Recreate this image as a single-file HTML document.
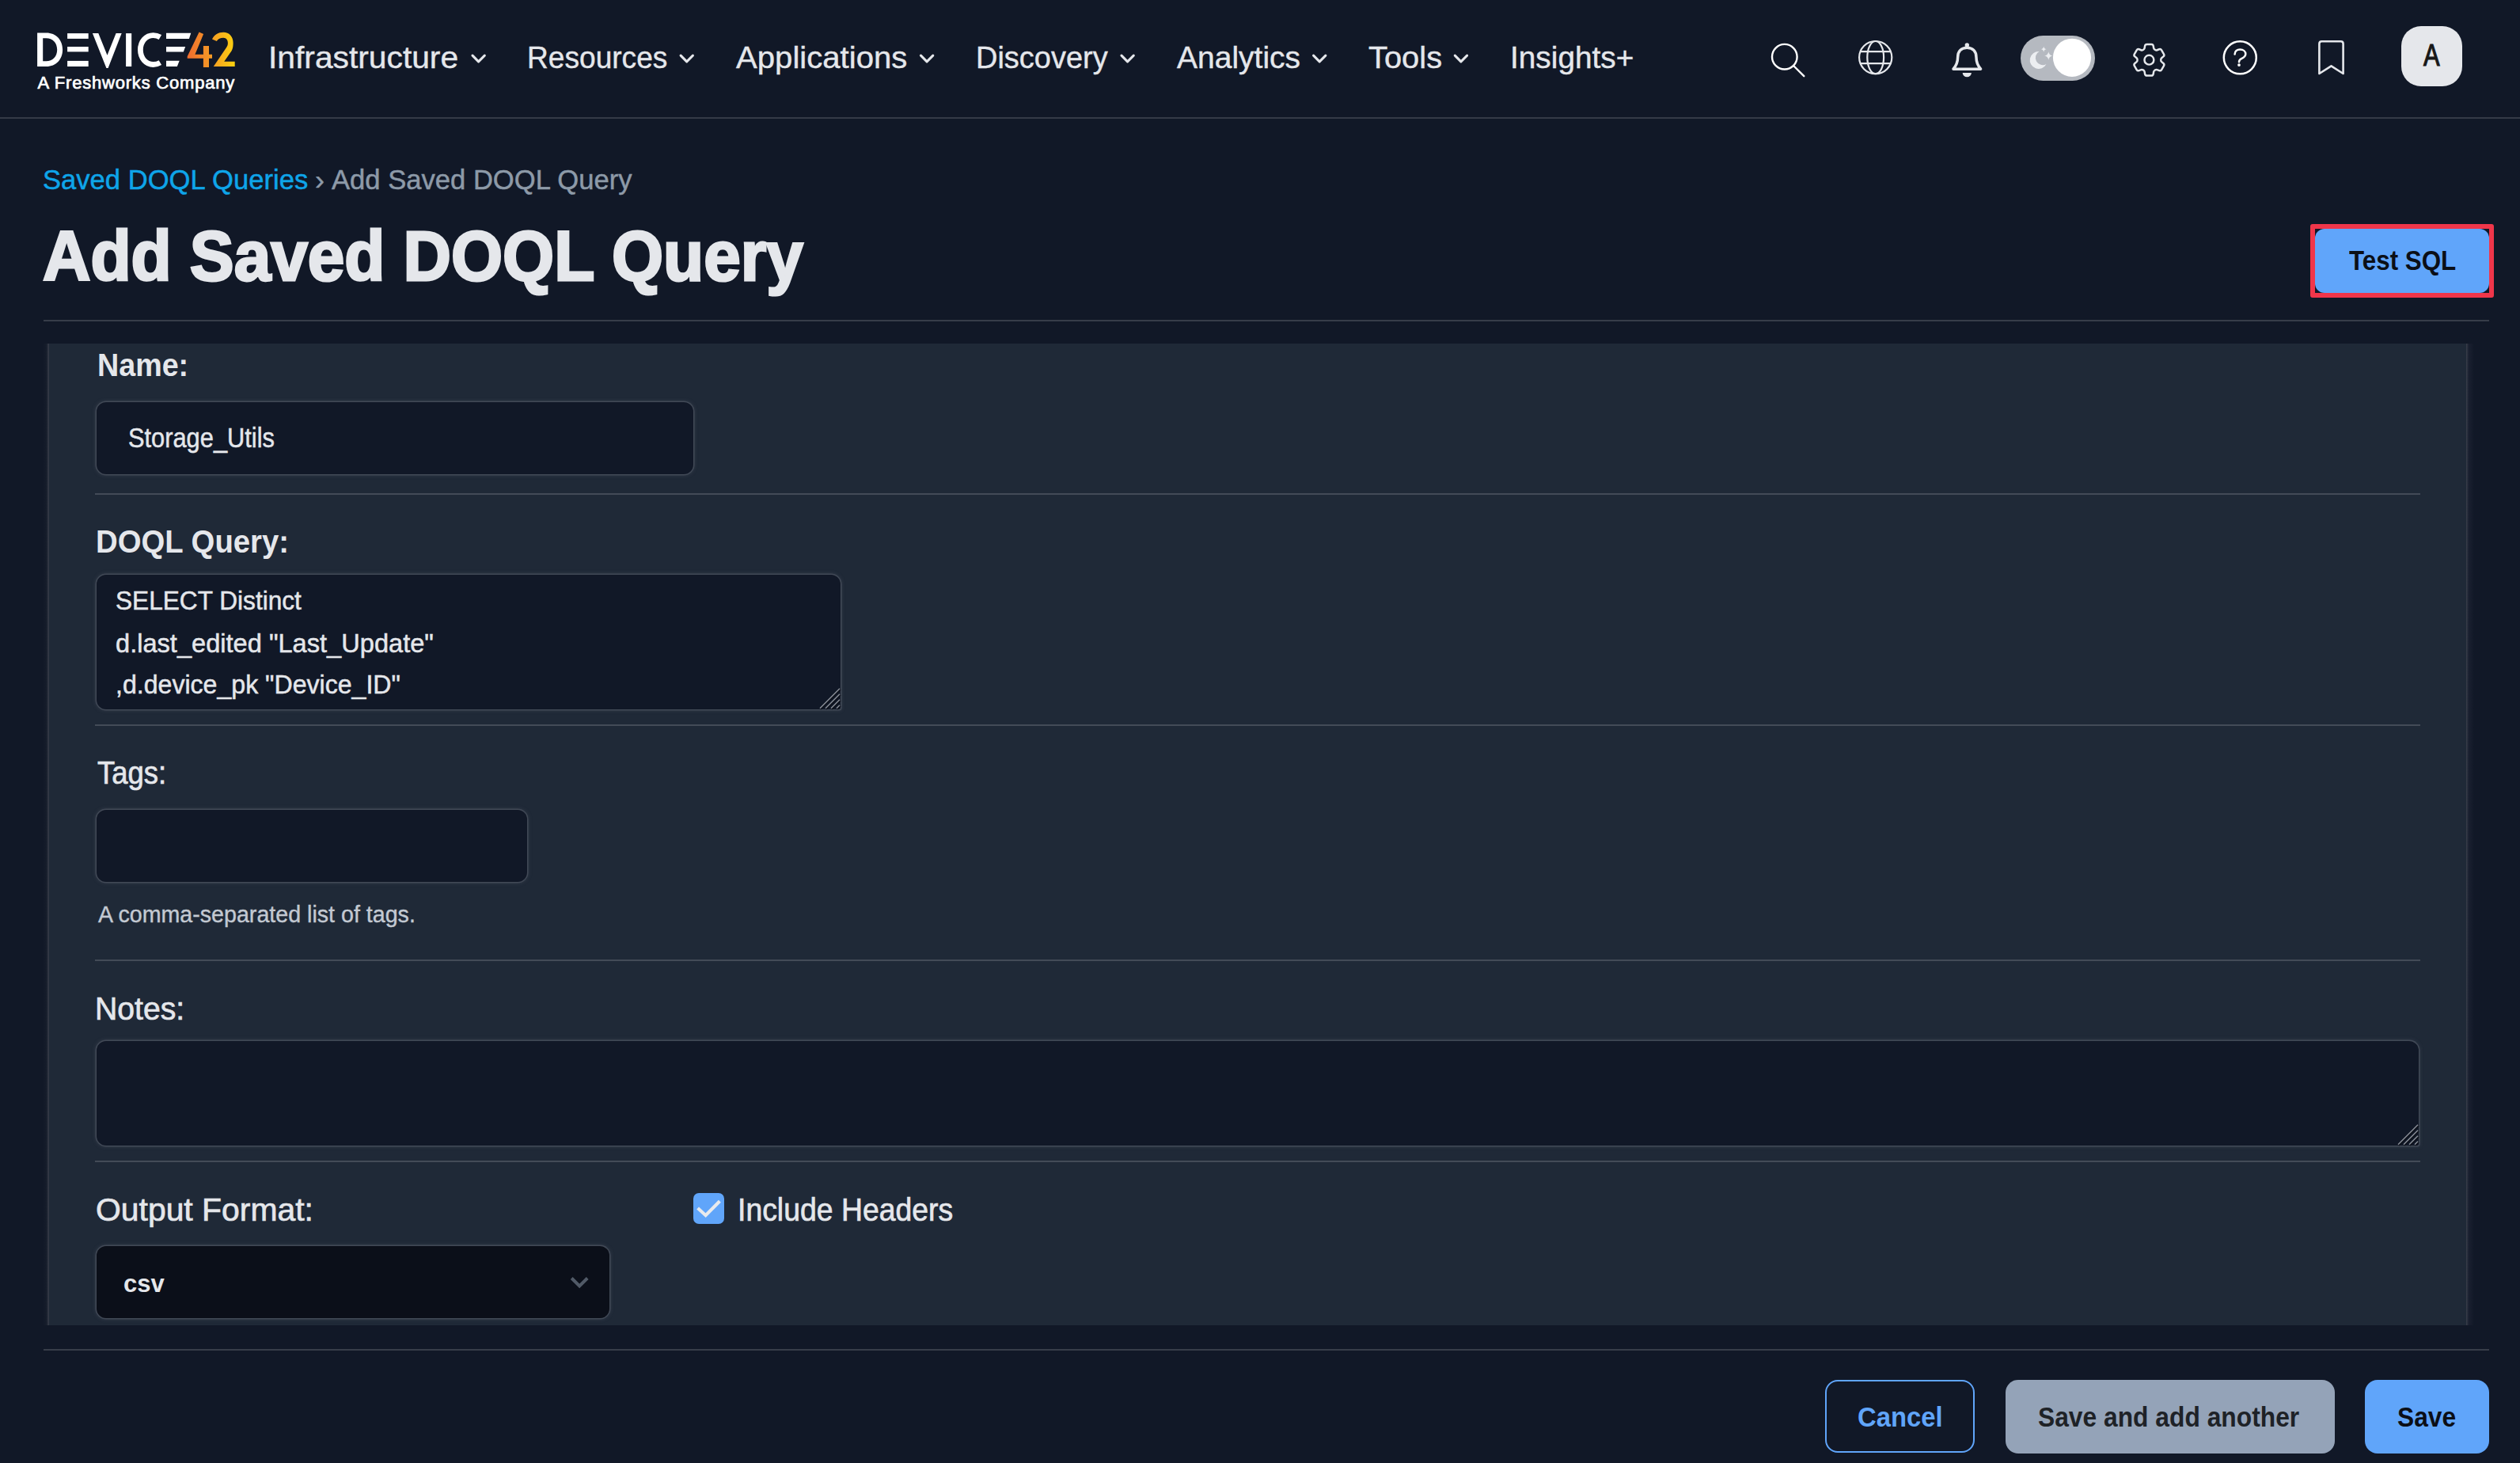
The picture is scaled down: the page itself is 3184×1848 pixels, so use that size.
<!DOCTYPE html>
<html>
<head>
<meta charset="utf-8">
<style>
html,body{margin:0;padding:0;}
body{width:3184px;height:1848px;overflow:hidden;background:#111827;position:relative;font-family:"Liberation Sans",sans-serif;color:#e5e7eb;}
.a{position:absolute;}
.t{position:absolute;white-space:pre;line-height:1;transform-origin:0 0;}
.hr{position:absolute;height:2px;background:rgba(255,255,255,0.16);}
svg{position:absolute;left:0;top:0;overflow:visible;}
.inp{background:#111827;border:0 solid transparent;border-radius:12px;box-sizing:border-box;box-shadow:0 0 0.5px 1.5px rgba(68,75,89,0.9), 0 0 4px 2px rgba(68,75,89,0.45);}
</style>
</head>
<body>
<!-- header border -->
<div class="hr" style="left:0;top:148px;width:3184px;background:rgba(255,255,255,0.15)"></div>

<!-- page SVG for logo + icons -->
<svg width="3184" height="150" viewBox="0 0 3184 150">
  <defs>
    <linearGradient id="g42" x1="236" y1="0" x2="297" y2="0" gradientUnits="userSpaceOnUse">
      <stop offset="0" stop-color="#ee6b2f"/>
      <stop offset="0.5" stop-color="#f59a25"/>
      <stop offset="1" stop-color="#fcd20f"/>
    </linearGradient>
  </defs>
  <!-- D -->
  <path fill="#ffffff" fill-rule="evenodd" d="M47.1,41.5 H58.5 C71,41.5 79.1,50.5 79.1,62.75 C79.1,75 71,84 58.5,84 H47.1 Z M54.2,48.2 H58.3 C66.5,48.2 72.2,54 72.2,62.7 C72.2,71.4 66.5,77.2 58.3,77.2 H54.2 Z"/>
  <!-- E -->
  <rect x="85.1" y="42.1" width="26.6" height="6.8" fill="#fff"/>
  <rect x="85.1" y="59.0" width="26.6" height="6.4" fill="#fff"/>
  <rect x="85.1" y="76.9" width="26.6" height="7.1" fill="#fff"/>
  <!-- V -->
  <polygon fill="#fff" points="116.9,42.1 124.3,42.1 135.5,69.8 146.6,42.1 153.7,42.1 136.6,86 134.4,86"/>
  <!-- I -->
  <rect x="159.1" y="42.1" width="7.1" height="41.9" fill="#fff"/>
  <!-- C -->
  <path d="M202.4,47 C199.5,45.3 196.6,44.6 193.6,44.6 C184.5,44.6 177.4,52.5 177.4,63.05 C177.4,73.6 184.5,81.5 193.6,81.5 C196.6,81.5 199.5,80.8 202.4,79.1" fill="none" stroke="#fff" stroke-width="6.8"/>
  <!-- slanted E -->
  <polygon fill="#fff" points="210,41.8 241.3,41.8 238.9,48.9 210,48.9"/>
  <polygon fill="#fff" points="210,58.9 234.2,58.9 231.8,65.6 210,65.6"/>
  <polygon fill="#fff" points="210,76.7 226.7,76.7 223.8,84 210,84"/>
  <!-- 4 -->
  <polygon fill="url(#g42)" points="251.6,40.4 257.1,43.1 246.4,68.7 256.9,68.7 256.9,58 264,58 264,68.7 268,68.7 268,73.8 264,73.8 264,84.9 256.9,84.9 256.9,73.8 236.7,73.8 236.7,71.2"/>
  <!-- 2 -->
  <path fill="url(#g42)" d="M269.8,84 H296.7 V77.8 H283.2 L292.6,64.2 C294.2,61.6 294.6,58 294.6,54.2 C294.6,46 289.5,40.7 282.3,40.7 C275.8,40.7 270.7,44 268,49.4 L273.8,52 C275.6,49 278.5,47.7 282.2,47.7 C286.2,47.7 287.9,50.7 287.9,54.2 C287.9,56.5 287.3,58.3 285.9,60.3 Z"/>

  <!-- nav chevrons -->
  <g fill="none" stroke="#e5e7eb" stroke-width="3.1" stroke-linecap="round" stroke-linejoin="round">
    <path d="M597,70.2 L604.6,77.8 L612.3,70.2"/>
    <path d="M860.1,70.2 L867.7,77.8 L875.4,70.2"/>
    <path d="M1163.5,70.2 L1171.1,77.8 L1178.8,70.2"/>
    <path d="M1417,70.2 L1424.6,77.8 L1432.3,70.2"/>
    <path d="M1659.6,70.2 L1667.2,77.8 L1674.9,70.2"/>
    <path d="M1838.3,70.2 L1845.9,77.8 L1853.6,70.2"/>
  </g>

  <!-- icons -->
  <g fill="none" stroke="#ffffff" stroke-width="2.4" stroke-linecap="round" stroke-linejoin="round">
    <!-- search -->
    <circle cx="2254.8" cy="71.7" r="15.8"/>
    <path d="M2266.6,83.5 L2279.3,96.2"/>
  </g>
  <g fill="none" stroke="#e5e7eb" stroke-width="2.2" stroke-linecap="round" stroke-linejoin="round">
    <!-- globe -->
    <circle cx="2369.7" cy="72.6" r="20.6"/>
    <ellipse cx="2369.7" cy="72.6" rx="10.4" ry="20.6"/>
    <path d="M2351.2,65.1 H2388.2 M2351.2,80.1 H2388.2"/>
  </g>
  <g fill="none" stroke="#e5e7eb" stroke-width="3.5" stroke-linecap="round" stroke-linejoin="round">
    <!-- bell -->
    <path d="M2468,87.2 C2472.9,81.5 2473.6,77.5 2473.6,72.5 C2473.6,64.3 2478.6,60.2 2485.3,60.2 C2492,60.2 2497,64.3 2497,72.5 C2497,77.5 2497.7,81.5 2502.6,87.2 Z"/>
  </g>
  <circle cx="2485.3" cy="57" r="2.7" fill="#e5e7eb"/>
  <path d="M2479.7,91.9 H2490.9 A5.6,5.4 0 0 1 2479.7,91.9 Z" fill="#e5e7eb"/>

  <!-- toggle -->
  <rect x="2553" y="45" width="94" height="57" rx="28.5" fill="#b5b9c0"/>
  <circle cx="2618" cy="72.8" r="24.1" fill="#ffffff"/>
  <path d="M2576.5,65 A11,11 0 1 0 2585.5,81 A8.6,8.6 0 0 1 2576.5,65 Z" fill="#eceef1"/>
  <path d="M2582.2,58.5 Q2582.6,61.8 2585.6,62.2 Q2582.6,62.6 2582.2,65.8 Q2581.8,62.6 2578.8,62.2 Q2581.8,61.8 2582.2,58.5 Z" fill="#eceef1"/>
  <path d="M2588.3,65.2 Q2588.9,69.8 2593.5,70.5 Q2588.9,71.2 2588.3,75.8 Q2587.7,71.2 2583.1,70.5 Q2587.7,69.8 2588.3,65.2 Z" fill="#eceef1"/>

  <!-- gear -->
  <g transform="translate(2689.0,49.3) scale(2.2)" fill="none" stroke="#e5e7eb" stroke-width="1.12" stroke-linecap="round" stroke-linejoin="round">
    <path d="M9.594 3.94c.09-.542.56-.94 1.11-.94h2.593c.55 0 1.020.398 1.110.940l.213 1.281c.063.374.313.686.645.870.074.040.147.083.220.127.325.196.720.257 1.075.124l1.217-.456a1.125 1.125 0 0 1 1.370.490l1.296 2.247a1.125 1.125 0 0 1-.260 1.431l-1.003.827c-.293.241-.438.613-.430.992a7.723 7.723 0 0 1 0 .255c-.008.378.137.750.430.991l1.004.827c.424.350.534.955.260 1.430l-1.298 2.247a1.125 1.125 0 0 1-1.369.491l-1.217-.456c-.355-.133-.750-.072-1.076.124a6.470 6.470 0 0 1-.220.128c-.331.183-.581.495-.644.869l-.213 1.281c-.090.543-.560.940-1.110.940h-2.594c-.550 0-1.019-.398-1.110-.940l-.213-1.281c-.062-.374-.312-.686-.644-.870a6.520 6.520 0 0 1-.220-.127c-.325-.196-.720-.257-1.076-.124l-1.217.456a1.125 1.125 0 0 1-1.369-.490l-1.297-2.247a1.125 1.125 0 0 1 .260-1.431l1.004-.827c.292-.240.437-.613.430-.991a6.932 6.932 0 0 1 0-.255c.007-.380-.138-.751-.430-.992l-1.004-.827a1.125 1.125 0 0 1-.260-1.430l1.297-2.247a1.125 1.125 0 0 1 1.370-.491l1.216.456c.356.133.751.072 1.076-.124.072-.044.146-.086.220-.128.332-.183.582-.495.644-.869l.214-1.280Z"/>
    <circle cx="12" cy="12" r="2.7"/>
  </g>

  <!-- help -->
  <g fill="none" stroke="#ffffff" stroke-width="2.5" stroke-linecap="round" stroke-linejoin="round">
    <circle cx="2830.3" cy="72.8" r="20.5"/>
    <path d="M2823.6,68.6 C2823.6,64.5 2826.6,62.5 2830.3,62.5 C2834.4,62.5 2837.3,65 2837.3,68.2 C2837.3,71.4 2834.8,72.8 2832,74.2 C2829.9,75.3 2829,76.3 2829,78.3"/>
  </g>
  <circle cx="2829" cy="82.1" r="1.9" fill="#fff"/>

  <!-- bookmark -->
  <path d="M2930.4,93 V55.3 Q2930.4,52.3 2933.4,52.3 H2957.6 Q2960.6,52.3 2960.6,55.3 V93 L2945.5,83.3 Z" fill="none" stroke="#e5e7eb" stroke-width="2.6" stroke-linejoin="round"/>

  <!-- avatar -->
  <rect x="3034" y="33" width="77" height="76" rx="25" fill="#e5e7eb"/>
</svg>

<!-- logo subtitle -->
<div class="t" style="left:47.6px;top:94.2px;font-size:22px;font-weight:400;color:#fff;-webkit-text-stroke:0.7px #fff;letter-spacing:0.8px">A Freshworks Company</div>

<!-- nav -->
<div class="t" style="left:339.3px;top:52.6px;font-size:39.7px;color:#e5e7eb;transform:scaleX(1.027);-webkit-text-stroke:0.4px #e5e7eb">Infrastructure</div>
<div class="t" style="left:666px;top:52.6px;font-size:39.7px;color:#e5e7eb;transform:scaleX(0.935);-webkit-text-stroke:0.4px #e5e7eb">Resources</div>
<div class="t" style="left:929.8px;top:52.6px;font-size:39.7px;color:#e5e7eb;transform:scaleX(1.011);-webkit-text-stroke:0.4px #e5e7eb">Applications</div>
<div class="t" style="left:1232.7px;top:52.6px;font-size:39.7px;color:#e5e7eb;transform:scaleX(0.957);-webkit-text-stroke:0.4px #e5e7eb">Discovery</div>
<div class="t" style="left:1487px;top:52.6px;font-size:39.7px;color:#e5e7eb;transform:scaleX(0.983);-webkit-text-stroke:0.4px #e5e7eb">Analytics</div>
<div class="t" style="left:1729.2px;top:52.6px;font-size:39.7px;color:#e5e7eb;transform:scaleX(1.005);-webkit-text-stroke:0.4px #e5e7eb">Tools</div>
<div class="t" style="left:1907.5px;top:52.6px;font-size:39.7px;color:#e5e7eb;transform:scaleX(0.978);-webkit-text-stroke:0.4px #e5e7eb">Insights+</div>

<div class="t" style="left:3062px;top:50.6px;font-size:38.5px;color:#171717;-webkit-text-stroke:1.2px #171717;transform:scaleX(0.80)">A</div>

<!-- breadcrumb -->
<div class="t" style="left:54.2px;top:210.1px;font-size:35.9px;color:#0ea5e9;-webkit-text-stroke:0.5px #0ea5e9;transform:scaleX(0.964)">Saved DOQL Queries</div>
<div class="t" style="left:398px;top:210.1px;font-size:35.9px;color:#8d9aa8;-webkit-text-stroke:0.5px #8d9aa8;">&#8250;</div>
<div class="t" style="left:419px;top:210.1px;font-size:35.9px;color:#8d9aa8;-webkit-text-stroke:0.5px #8d9aa8;transform:scaleX(0.964)">Add Saved DOQL Query</div>

<!-- title -->
<div class="t" style="left:53.5px;top:278.7px;font-size:89px;font-weight:700;color:#e5e7eb;-webkit-text-stroke:3px #e5e7eb;transform:scaleX(0.94)">Add Saved DOQL Query</div>

<!-- Test SQL button -->
<div class="a" style="left:2919px;top:283px;width:220px;height:81px;border:6px solid #f0364a;border-radius:3px;"></div>
<div class="a" style="left:2925px;top:289px;width:220px;height:81px;background:#60a5fa;border-radius:12px;"></div>
<div class="t" style="left:2967.7px;top:311.7px;font-size:35.7px;font-weight:700;color:#0b0f17;transform:scaleX(0.878)">Test SQL</div>

<!-- title hr -->
<div class="hr" style="left:55px;top:404px;width:3090px;"></div>

<!-- form panel -->
<div class="a" style="left:62px;top:434px;width:3054px;height:1240px;background:#1f2937;"></div>
<div class="a" style="left:54px;top:434px;width:8px;height:1240px;background:linear-gradient(to right,#111827,#161d2b 60%,#3b404c);"></div>
<div class="a" style="left:3116px;top:434px;width:10px;height:1240px;background:linear-gradient(to right,#3b404c,#1a2030 30%,#111827);"></div>

<!-- row separators -->
<div class="hr" style="left:120px;top:623px;width:2938px;"></div>
<div class="hr" style="left:120px;top:915px;width:2938px;"></div>
<div class="hr" style="left:120px;top:1212px;width:2938px;"></div>
<div class="hr" style="left:120px;top:1466px;width:2938px;"></div>

<!-- Name -->
<div class="t" style="left:123px;top:441.3px;font-size:41px;font-weight:700;color:#e5e7eb;transform:scaleX(0.919)">Name:</div>
<div class="a inp" style="left:122px;top:508px;width:754px;height:91px;"></div>
<div class="t" style="left:162.4px;top:535.4px;font-size:35px;color:#e5e7eb;transform:scaleX(0.88);-webkit-text-stroke:0.5px #e5e7eb">Storage_Utils</div>

<!-- DOQL Query -->
<div class="t" style="left:120.8px;top:663.5px;font-size:40.6px;font-weight:700;color:#e5e7eb;transform:scaleX(0.944)">DOQL Query:</div>
<div class="a inp" style="left:122px;top:726px;width:940px;height:170px;border-bottom-right-radius:2px;"></div>
<div class="t" style="left:145.8px;top:742.4px;font-size:33.5px;color:#e5e7eb;transform:scaleX(0.944);-webkit-text-stroke:0.5px #e5e7eb">SELECT Distinct</div>
<div class="t" style="left:145.8px;top:795.6px;font-size:33.5px;color:#e5e7eb;transform:scaleX(0.973);-webkit-text-stroke:0.5px #e5e7eb">d.last_edited "Last_Update"</div>
<div class="t" style="left:145.8px;top:847.6px;font-size:33.5px;color:#e5e7eb;transform:scaleX(0.958);-webkit-text-stroke:0.5px #e5e7eb">,d.device_pk "Device_ID"</div>

<!-- Tags -->
<div class="t" style="left:122.8px;top:956.6px;font-size:40.3px;color:#e5e7eb;transform:scaleX(0.904);-webkit-text-stroke:0.7px #e5e7eb">Tags:</div>
<div class="a inp" style="left:122px;top:1023px;width:544px;height:91px;"></div>
<div class="t" style="left:123.5px;top:1140.2px;font-size:29.7px;color:#c3c9d2;transform:scaleX(0.964);-webkit-text-stroke:0.4px #c3c9d2">A comma-separated list of tags.</div>

<!-- Notes -->
<div class="t" style="left:120.4px;top:1253.6px;font-size:40px;color:#e5e7eb;transform:scaleX(0.979);-webkit-text-stroke:0.7px #e5e7eb">Notes:</div>
<div class="a inp" style="left:122px;top:1315px;width:2934px;height:132px;border-bottom-right-radius:2px;"></div>

<!-- Output format -->
<div class="t" style="left:120.8px;top:1507.9px;font-size:41.3px;color:#e5e7eb;transform:scaleX(0.99);-webkit-text-stroke:0.7px #e5e7eb">Output Format:</div>
<div class="a inp" style="left:122px;top:1574px;width:648px;height:91px;background:#0b0f19;"></div>
<div class="t" style="left:156px;top:1606px;font-size:31px;font-weight:700;color:#e5e7eb;">csv</div>
<div class="a" style="left:876px;top:1507px;width:39px;height:39px;border-radius:7px;background:#60a5fa;"></div>
<div class="t" style="left:932.1px;top:1507.9px;font-size:41.3px;color:#e5e7eb;transform:scaleX(0.905);-webkit-text-stroke:0.7px #e5e7eb">Include Headers</div>

<!-- bottom hr -->
<div class="hr" style="left:55px;top:1704px;width:3090px;"></div>

<!-- bottom buttons -->
<div class="a" style="left:2306px;top:1743px;width:185px;height:88px;border:2.5px solid #60a5fa;border-radius:16px;"></div>
<div class="t" style="left:2346.9px;top:1773.4px;font-size:35.5px;font-weight:700;color:#60a5fa;transform:scaleX(0.925)">Cancel</div>
<div class="a" style="left:2534px;top:1743px;width:416px;height:93px;background:#94a3b8;border-radius:16px;"></div>
<div class="t" style="left:2575.2px;top:1773.4px;font-size:35.5px;font-weight:700;color:#1e2227;transform:scaleX(0.895)">Save and add another</div>
<div class="a" style="left:2988px;top:1743px;width:157px;height:93px;background:#60a5fa;border-radius:16px;"></div>
<div class="t" style="left:3029.2px;top:1773.4px;font-size:35.5px;font-weight:700;color:#0b0f17;transform:scaleX(0.893)">Save</div>

<!-- svg overlays for form -->
<svg width="3184" height="1848" viewBox="0 0 3184 1848">
  <g stroke="#0b0f19" stroke-width="3">
    <path d="M1036.5,895.5 L1061.5,870.5 M1043.5,895.5 L1061.5,877.5 M1050.5,895.5 L1061.5,884.5 M1057.5,895.5 L1061.5,891.5"/>
    <path d="M3030.5,1446.5 L3055.5,1421.5 M3037.5,1446.5 L3055.5,1428.5 M3044.5,1446.5 L3055.5,1435.5 M3051.5,1446.5 L3055.5,1442.5"/>
  </g>
  <g stroke="#8b909a" stroke-width="1.5">
    <path d="M1036,894.7 L1061,869.7 M1043,894.7 L1061,876.7 M1050,894.7 L1061,883.7 M1057,894.7 L1061,890.7"/>
    <path d="M3030,1445.7 L3055,1420.7 M3037,1445.7 L3055,1427.7 M3044,1445.7 L3055,1434.7 M3051,1445.7 L3055,1441.7"/>
  </g>
  <path d="M722.2,1614.5 L732.2,1624.5 L742.2,1614.5" fill="none" stroke="#515a67" stroke-width="4"/>
  <path d="M881.6,1526 L891.6,1535.2 L909.4,1517.3" fill="none" stroke="#e8eaed" stroke-width="4.2"/>
</svg>

</body>
</html>
